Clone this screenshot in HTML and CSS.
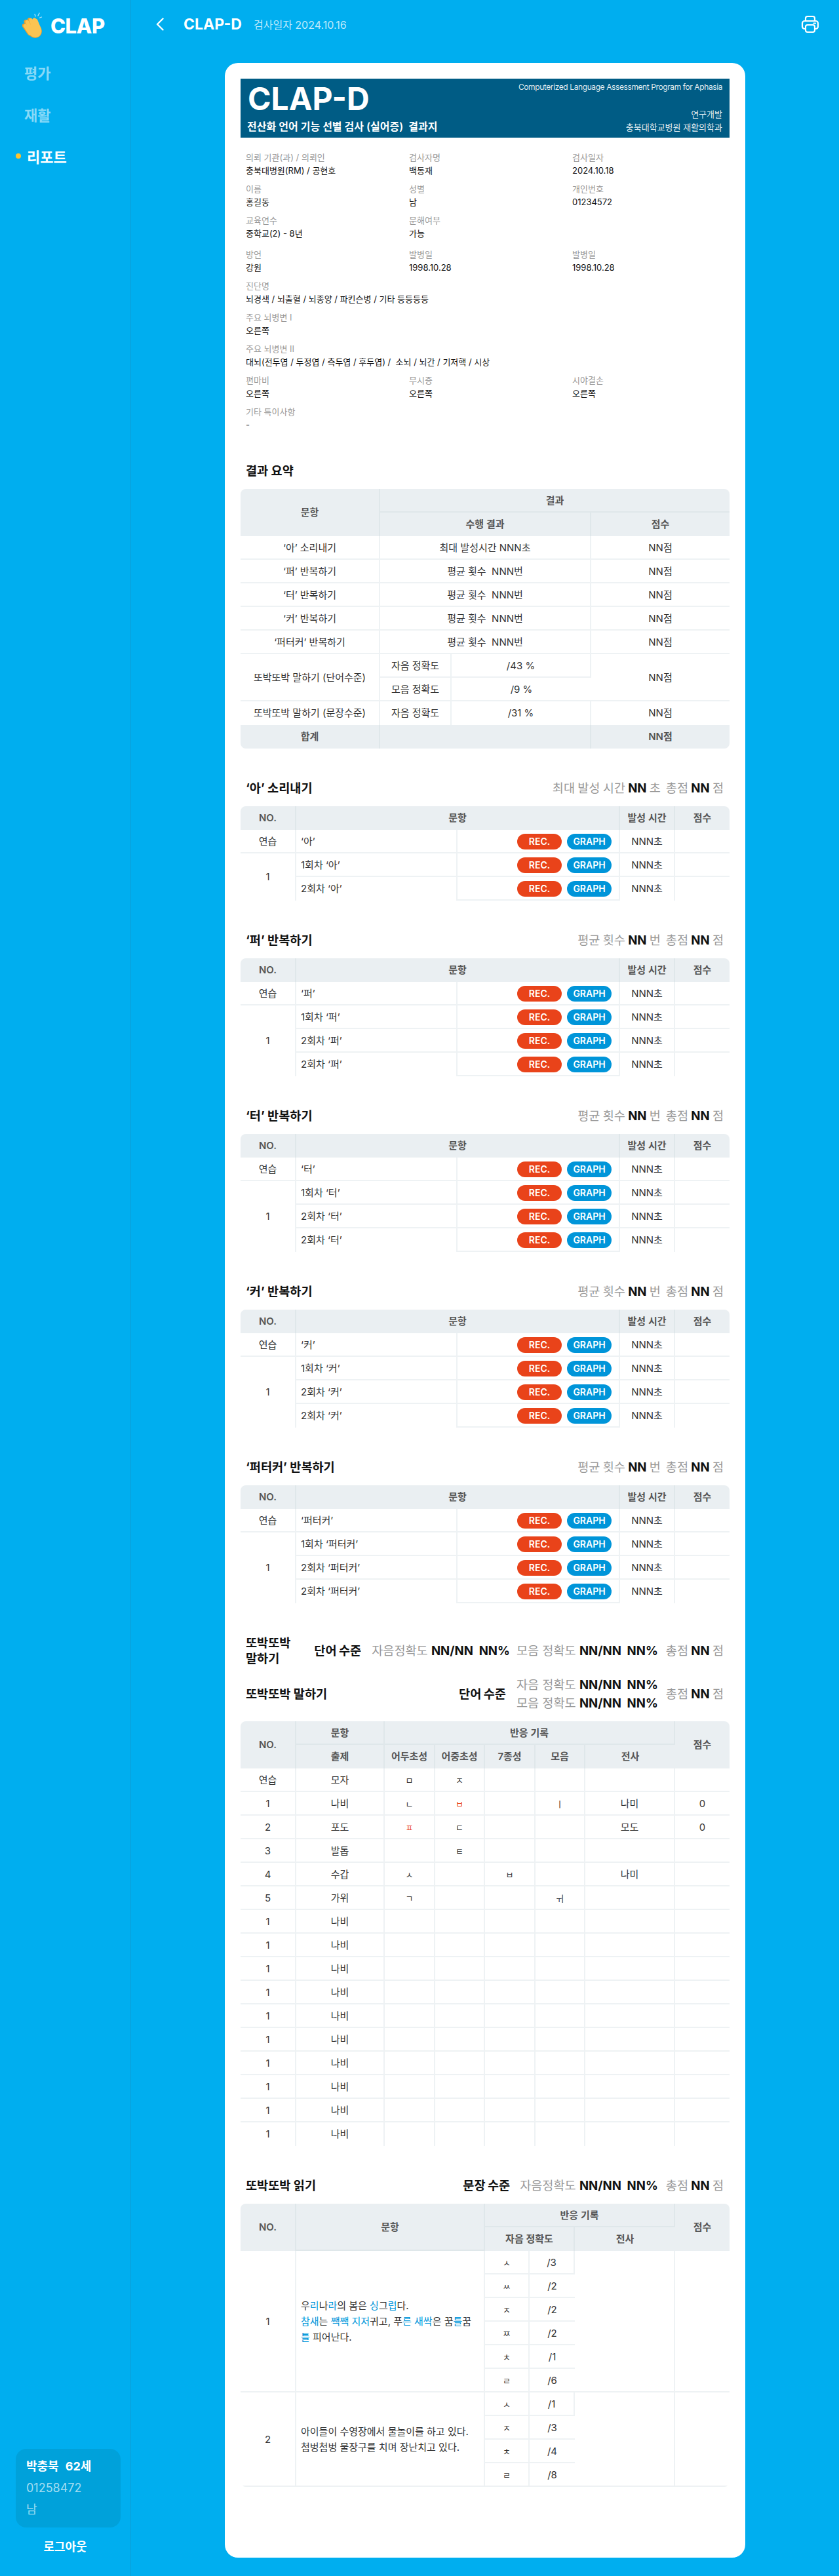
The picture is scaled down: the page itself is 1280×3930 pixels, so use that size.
FILE: index.html
```html
<!DOCTYPE html>
<html lang="ko">
<head>
    <meta charset="UTF-8">
    <meta name="viewport" content="width=device-width, initial-scale=1.0">
    <title>CLAP-D 리포트</title>
    <link rel="stylesheet" href="styles.css">
</head>
<body>
<div class="layout">
    <aside class="sidebar">
        <div class="logo">
            <svg class="logo-hand" width="32" height="40" viewBox="0 0 32 40">
                <path d="M19 2.500l1 3.500M26 1l-2 4M29.500 7l-3 1.200" fill="none" stroke="#bfeafb" stroke-width="1.200" stroke-linecap="round"/>
                <g fill="none" stroke="#ee9f2c" stroke-width="6" stroke-linecap="round">
                    <path d="M2.700 20L11 32M5.500 14L14 28M11 11L18 26"/>
                </g>
                <circle cx="19.500" cy="28.500" r="10.500" fill="#ee9f2c"/>
                <g fill="none" stroke="#fbc452" stroke-width="5.500" stroke-linecap="round">
                    <path d="M4.500 20.500L12 32M7.500 14.500L15 28M13 11.500L19 26M18.500 11L23 25"/>
                </g>
                <path d="M20.500 9.500c1.500 0 2.500 1 3 2.500l5 12c2 6-1 14-8 14-5 0-8-3-10-6l1-9 9-2z" fill="#fbc452"/>
            </svg>
            <span class="logo-text">CLAP</span>
        </div>
        <nav class="nav">
            <a class="nav-item">평가</a>
            <a class="nav-item">재활</a>
            <a class="nav-item active">리포트</a>
        </nav>
        <div class="patient">
            <div class="patient-name"><span>박충북</span><span>62세</span></div>
            <div class="patient-sub">01258472</div>
            <div class="patient-sub">남</div>
        </div>
        <div class="logout">로그아웃</div>
    </aside>

    <main class="main">
        <header class="topbar">
            <svg class="back" width="12" height="20" viewBox="0 0 12 20">
                <path d="M10.500 1.500L2 10l8.500 8.500" fill="none" stroke="#fff" stroke-width="2.400" stroke-linecap="round" stroke-linejoin="round"/>
            </svg>
            <span class="top-title">CLAP-D</span>
            <span class="top-date">검사일자 2024.10.16</span>
            <svg class="print" width="28" height="28" viewBox="0 0 28 28" fill="none" stroke="#fff" stroke-width="2.200" stroke-linejoin="round" stroke-linecap="round">
                <path d="M7 9V5a3 3 0 0 1 3-3h8a3 3 0 0 1 3 3v4"/>
                <path d="M7 21H5.500a3.500 3.500 0 0 1-3.500-3.500V12.500A3.500 3.500 0 0 1 5.500 9h17a3.500 3.500 0 0 1 3.500 3.500v5a3.500 3.500 0 0 1-3.500 3.500H21"/>
                <rect x="7" y="15" width="14" height="11" rx="3"/>
                <path d="M19.500 12.500h2.500"/>
            </svg>
        </header>

        <div class="report">
            <div class="doc-head">
                <div class="doc-left">
                    <div class="doc-title">CLAP-D</div>
                    <div class="doc-sub">전산화 언어 기능 선별 검사 (실어증)&nbsp; 결과지</div>
                </div>
                <div class="doc-right">
                    <div class="doc-en">Computerized Language Assessment Program for Aphasia</div>
                    <div>연구개발<br>충북대학교병원 재활의학과</div>
                </div>
            </div>

            <div class="info">
                <div class="field"><label>의뢰 기관(과) / 의뢰인</label><p>충북대병원(RM) / 공현호</p></div>
                <div class="field"><label>검사자명</label><p>백동재</p></div>
                <div class="field"><label>검사일자</label><p>2024.10.18</p></div>
                <div class="field"><label>이름</label><p>홍길동</p></div>
                <div class="field"><label>성별</label><p>남</p></div>
                <div class="field"><label>개인번호</label><p>01234572</p></div>
                <div class="field"><label>교육연수</label><p>중학교(2) - 8년</p></div>
                <div class="field"><label>문해여부</label><p>가능</p></div>
                <div class="field"></div>
                <div class="field push"><label>방언</label><p>강원</p></div>
                <div class="field push"><label>발병일</label><p>1998.10.28</p></div>
                <div class="field push"><label>발병일</label><p>1998.10.28</p></div>
                <div class="field wide"><label>진단명</label><p>뇌경색 / 뇌출혈 / 뇌종양 / 파킨슨병 / 기타 등등등등</p></div>
                <div class="field wide"><label>주요 뇌병변 I</label><p>오른쪽</p></div>
                <div class="field wide"><label>주요 뇌병변 II</label><p>대뇌(전두엽 / 두정엽 / 측두엽 / 후두엽) / &nbsp;소뇌 / 뇌간 / 기저핵 / 시상</p></div>
                <div class="field"><label>편마비</label><p>오른쪽</p></div>
                <div class="field"><label>무시증</label><p>오른쪽</p></div>
                <div class="field"><label>시야결손</label><p>오른쪽</p></div>
                <div class="field wide"><label>기타 특이사항</label><p>-</p></div>
            </div>

            <section class="section">
                <div class="sec-head"><h2>결과 요약</h2></div>
                <div class="tb-wrap">
                    <table class="tb tb-summary">
                        <colgroup><col><col><col><col></colgroup>
                        <thead>
                            <tr><th rowspan="2">문항</th><th colspan="3" class="bb">결과</th></tr>
                            <tr><th colspan="2">수행 결과</th><th>점수</th></tr>
                        </thead>
                        <tbody>
                            <tr><td>‘아’ 소리내기</td><td colspan="2">최대 발성시간 NNN초</td><td>NN점</td></tr>
                            <tr><td>‘퍼’ 반복하기</td><td colspan="2">평균 횟수 &nbsp;NNN번</td><td>NN점</td></tr>
                            <tr><td>‘터’ 반복하기</td><td colspan="2">평균 횟수 &nbsp;NNN번</td><td>NN점</td></tr>
                            <tr><td>‘커’ 반복하기</td><td colspan="2">평균 횟수 &nbsp;NNN번</td><td>NN점</td></tr>
                            <tr><td>‘퍼터커’ 반복하기</td><td colspan="2">평균 횟수 &nbsp;NNN번</td><td>NN점</td></tr>
                            <tr><td rowspan="2">또박또박 말하기 (단어수준)</td><td>자음 정확도</td><td>/43 %</td><td rowspan="2">NN점</td></tr>
                            <tr><td>모음 정확도</td><td>/9 %</td></tr>
                            <tr><td>또박또박 말하기 (문장수준)</td><td>자음 정확도</td><td>/31 %</td><td>NN점</td></tr>
                        </tbody>
                        <tfoot>
                            <tr><th>합계</th><th colspan="2"></th><th>NN점</th></tr>
                        </tfoot>
                    </table>
                </div>
            </section>

            <section class="section">
                <div class="sec-head">
                    <h2>‘아’ 소리내기</h2>
                    <div class="stats"><span>최대 발성 시간 <b>NN</b> 초</span><span>총점 <b>NN</b> 점</span></div>
                </div>
                <div class="tb-wrap">
                    <table class="tb tb-repeat">
                        <colgroup><col><col><col><col><col></colgroup>
                        <thead><tr><th>NO.</th><th colspan="2">문항</th><th>발성 시간</th><th>점수</th></tr></thead>
                        <tbody>
                            <tr><td>연습</td><td class="left">‘아’</td><td class="btns"><a class="btn rec">REC.</a><a class="btn graph">GRAPH</a></td><td>NNN초</td><td></td></tr>
                            <tr><td rowspan="2" class="nb">1</td><td class="left">1회차 ‘아’</td><td class="btns"><a class="btn rec">REC.</a><a class="btn graph">GRAPH</a></td><td>NNN초</td><td></td></tr>
                            <tr><td class="left">2회차 ‘아’</td><td class="btns bb"><a class="btn rec">REC.</a><a class="btn graph">GRAPH</a></td><td>NNN초</td><td></td></tr>
                        </tbody>
                    </table>
                </div>
            </section>

            <section class="section">
                <div class="sec-head">
                    <h2>‘퍼’ 반복하기</h2>
                    <div class="stats"><span>평균 횟수 <b>NN</b> 번</span><span>총점 <b>NN</b> 점</span></div>
                </div>
                <div class="tb-wrap">
                    <table class="tb tb-repeat">
                        <colgroup><col><col><col><col><col></colgroup>
                        <thead><tr><th>NO.</th><th colspan="2">문항</th><th>발성 시간</th><th>점수</th></tr></thead>
                        <tbody>
                            <tr><td>연습</td><td class="left">‘퍼’</td><td class="btns"><a class="btn rec">REC.</a><a class="btn graph">GRAPH</a></td><td>NNN초</td><td></td></tr>
                            <tr><td rowspan="3" class="nb">1</td><td class="left">1회차 ‘퍼’</td><td class="btns"><a class="btn rec">REC.</a><a class="btn graph">GRAPH</a></td><td>NNN초</td><td></td></tr>
                            <tr><td class="left">2회차 ‘퍼’</td><td class="btns"><a class="btn rec">REC.</a><a class="btn graph">GRAPH</a></td><td>NNN초</td><td></td></tr>
                            <tr><td class="left">2회차 ‘퍼’</td><td class="btns bb"><a class="btn rec">REC.</a><a class="btn graph">GRAPH</a></td><td>NNN초</td><td></td></tr>
                        </tbody>
                    </table>
                </div>
            </section>

            <section class="section">
                <div class="sec-head">
                    <h2>‘터’ 반복하기</h2>
                    <div class="stats"><span>평균 횟수 <b>NN</b> 번</span><span>총점 <b>NN</b> 점</span></div>
                </div>
                <div class="tb-wrap">
                    <table class="tb tb-repeat">
                        <colgroup><col><col><col><col><col></colgroup>
                        <thead><tr><th>NO.</th><th colspan="2">문항</th><th>발성 시간</th><th>점수</th></tr></thead>
                        <tbody>
                            <tr><td>연습</td><td class="left">‘터’</td><td class="btns"><a class="btn rec">REC.</a><a class="btn graph">GRAPH</a></td><td>NNN초</td><td></td></tr>
                            <tr><td rowspan="3" class="nb">1</td><td class="left">1회차 ‘터’</td><td class="btns"><a class="btn rec">REC.</a><a class="btn graph">GRAPH</a></td><td>NNN초</td><td></td></tr>
                            <tr><td class="left">2회차 ‘터’</td><td class="btns"><a class="btn rec">REC.</a><a class="btn graph">GRAPH</a></td><td>NNN초</td><td></td></tr>
                            <tr><td class="left">2회차 ‘터’</td><td class="btns bb"><a class="btn rec">REC.</a><a class="btn graph">GRAPH</a></td><td>NNN초</td><td></td></tr>
                        </tbody>
                    </table>
                </div>
            </section>

            <section class="section">
                <div class="sec-head">
                    <h2>‘커’ 반복하기</h2>
                    <div class="stats"><span>평균 횟수 <b>NN</b> 번</span><span>총점 <b>NN</b> 점</span></div>
                </div>
                <div class="tb-wrap">
                    <table class="tb tb-repeat">
                        <colgroup><col><col><col><col><col></colgroup>
                        <thead><tr><th>NO.</th><th colspan="2">문항</th><th>발성 시간</th><th>점수</th></tr></thead>
                        <tbody>
                            <tr><td>연습</td><td class="left">‘커’</td><td class="btns"><a class="btn rec">REC.</a><a class="btn graph">GRAPH</a></td><td>NNN초</td><td></td></tr>
                            <tr><td rowspan="3" class="nb">1</td><td class="left">1회차 ‘커’</td><td class="btns"><a class="btn rec">REC.</a><a class="btn graph">GRAPH</a></td><td>NNN초</td><td></td></tr>
                            <tr><td class="left">2회차 ‘커’</td><td class="btns"><a class="btn rec">REC.</a><a class="btn graph">GRAPH</a></td><td>NNN초</td><td></td></tr>
                            <tr><td class="left">2회차 ‘커’</td><td class="btns bb"><a class="btn rec">REC.</a><a class="btn graph">GRAPH</a></td><td>NNN초</td><td></td></tr>
                        </tbody>
                    </table>
                </div>
            </section>

            <section class="section">
                <div class="sec-head">
                    <h2>‘퍼터커’ 반복하기</h2>
                    <div class="stats"><span>평균 횟수 <b>NN</b> 번</span><span>총점 <b>NN</b> 점</span></div>
                </div>
                <div class="tb-wrap">
                    <table class="tb tb-repeat">
                        <colgroup><col><col><col><col><col></colgroup>
                        <thead><tr><th>NO.</th><th colspan="2">문항</th><th>발성 시간</th><th>점수</th></tr></thead>
                        <tbody>
                            <tr><td>연습</td><td class="left">‘퍼터커’</td><td class="btns"><a class="btn rec">REC.</a><a class="btn graph">GRAPH</a></td><td>NNN초</td><td></td></tr>
                            <tr><td rowspan="3" class="nb">1</td><td class="left">1회차 ‘퍼터커’</td><td class="btns"><a class="btn rec">REC.</a><a class="btn graph">GRAPH</a></td><td>NNN초</td><td></td></tr>
                            <tr><td class="left">2회차 ‘퍼터커’</td><td class="btns"><a class="btn rec">REC.</a><a class="btn graph">GRAPH</a></td><td>NNN초</td><td></td></tr>
                            <tr><td class="left">2회차 ‘퍼터커’</td><td class="btns bb"><a class="btn rec">REC.</a><a class="btn graph">GRAPH</a></td><td>NNN초</td><td></td></tr>
                        </tbody>
                    </table>
                </div>
            </section>

            <section class="section">
                <div class="sec-head tall">
                    <h2 class="narrow">또박또박 말하기</h2>
                    <div class="stats"><h3>단어 수준</h3><div class="acc"><span>자음정확도 <b>NN/NN&nbsp; NN%</b></span><span>모음 정확도 <b>NN/NN&nbsp; NN%</b></span></div><span>총점 <b>NN</b> 점</span></div>
                </div>
                <div class="sec-head tall">
                    <h2>또박또박 말하기</h2>
                    <div class="stats"><h3>단어 수준</h3><div class="acc stack"><span>자음 정확도 <b>NN/NN&nbsp; NN%</b></span><span>모음 정확도 <b>NN/NN&nbsp; NN%</b></span></div><span>총점 <b>NN</b> 점</span></div>
                </div>
                <div class="tb-wrap">
                    <table class="tb tb-word">
                        <colgroup><col><col><col><col><col><col><col><col></colgroup>
                        <thead>
                            <tr><th rowspan="2">NO.</th><th class="bb">문항</th><th colspan="5" class="bb">반응 기록</th><th rowspan="2">점수</th></tr>
                            <tr><th>출제</th><th>어두초성</th><th>어중초성</th><th>7종성</th><th>모음</th><th>전사</th></tr>
                        </thead>
                        <tbody>
                            <tr><td>연습</td><td>모자</td><td class="jamo">ㅁ</td><td class="jamo">ㅈ</td><td></td><td></td><td></td><td></td></tr>
                            <tr><td>1</td><td>나비</td><td class="jamo">ㄴ</td><td class="jamo red">ㅂ</td><td></td><td class="jamo">ㅣ</td><td>나미</td><td>0</td></tr>
                            <tr><td>2</td><td>포도</td><td class="jamo red">ㅍ</td><td class="jamo">ㄷ</td><td></td><td></td><td>모도</td><td>0</td></tr>
                            <tr><td>3</td><td>발톱</td><td></td><td class="jamo">ㅌ</td><td></td><td></td><td></td><td></td></tr>
                            <tr><td>4</td><td>수갑</td><td class="jamo">ㅅ</td><td></td><td class="jamo">ㅂ</td><td></td><td>나미</td><td></td></tr>
                            <tr><td>5</td><td>가위</td><td class="jamo">ㄱ</td><td></td><td></td><td class="jamo">ㅟ</td><td></td><td></td></tr>
                            <tr><td>1</td><td>나비</td><td></td><td></td><td></td><td></td><td></td><td></td></tr>
                            <tr><td>1</td><td>나비</td><td></td><td></td><td></td><td></td><td></td><td></td></tr>
                            <tr><td>1</td><td>나비</td><td></td><td></td><td></td><td></td><td></td><td></td></tr>
                            <tr><td>1</td><td>나비</td><td></td><td></td><td></td><td></td><td></td><td></td></tr>
                            <tr><td>1</td><td>나비</td><td></td><td></td><td></td><td></td><td></td><td></td></tr>
                            <tr><td>1</td><td>나비</td><td></td><td></td><td></td><td></td><td></td><td></td></tr>
                            <tr><td>1</td><td>나비</td><td></td><td></td><td></td><td></td><td></td><td></td></tr>
                            <tr><td>1</td><td>나비</td><td></td><td></td><td></td><td></td><td></td><td></td></tr>
                            <tr><td>1</td><td>나비</td><td></td><td></td><td></td><td></td><td></td><td></td></tr>
                            <tr><td>1</td><td>나비</td><td></td><td></td><td></td><td></td><td></td><td></td></tr>
                        </tbody>
                    </table>
                </div>
            </section>

            <section class="section">
                <div class="sec-head">
                    <h2>또박또박 읽기</h2>
                    <div class="stats"><h3 class="level-sent">문장 수준</h3><div class="acc"><span>자음정확도 <b>NN/NN&nbsp; NN%</b></span></div><span>총점 <b>NN</b> 점</span></div>
                </div>
                <div class="tb-wrap">
                    <table class="tb tb-read">
                        <colgroup><col><col><col><col><col><col></colgroup>
                        <thead>
                            <tr><th rowspan="2">NO.</th><th rowspan="2" class="bb">문항</th><th colspan="3" class="bb">반응 기록</th><th rowspan="2">점수</th></tr>
                            <tr><th colspan="2">자음 정확도</th><th>전사</th></tr>
                        </thead>
                        <tbody>
                            <tr>
                                <td rowspan="6">1</td>
                                <td rowspan="6" class="left sentence">우<em>리</em>나<em>라</em>의 봄은 <em>싱</em>그<em>럽</em>다.<br><em>참새</em>는 <em>짹짹 지저</em>귀고, 푸<em>른 새싹</em>은 꿈<em>틀</em>꿈<em>틀</em> 피어난다.</td>
                                <td class="jamo">ㅅ</td><td>/3</td>
                                <td rowspan="6"></td>
                                <td rowspan="6"></td>
                            </tr>
                            <tr><td class="jamo">ㅆ</td><td>/2</td></tr>
                            <tr><td class="jamo">ㅈ</td><td>/2</td></tr>
                            <tr><td class="jamo">ㅉ</td><td>/2</td></tr>
                            <tr><td class="jamo">ㅊ</td><td>/1</td></tr>
                            <tr><td class="jamo">ㄹ</td><td>/6</td></tr>
                            <tr>
                                <td rowspan="4">2</td>
                                <td rowspan="4" class="left sentence">아이들이 수영장에서 물놀이를 하고 있다.<br>첨벙첨벙 물장구를 치며 장난치고 있다.</td>
                                <td class="jamo">ㅅ</td><td>/1</td>
                                <td rowspan="4"></td>
                                <td rowspan="4"></td>
                            </tr>
                            <tr><td class="jamo">ㅈ</td><td>/3</td></tr>
                            <tr><td class="jamo">ㅊ</td><td>/4</td></tr>
                            <tr><td class="jamo">ㄹ</td><td>/8</td></tr>
                        </tbody>
                    </table>
                </div>
            </section>
        </div>
    </main>
</div>
</body>
</html>
```

FILE: styles.css
```css
* {
    box-sizing: border-box;
}

body {
    margin: 0;
    background-color: #00aeef;
    font-family: Inter, "Noto Sans CJK KR", sans-serif;
    color: #333;
}

.layout {
    display: flex;
    min-height: 3930px;
}

/* sidebar */
.sidebar {
    width: 200px;
    flex-shrink: 0;
    display: flex;
    flex-direction: column;
    border-right: 1px solid #0b9fd8;
    color: #fff;
}

.logo {
    display: flex;
    align-items: center;
    gap: 11px;
    height: 78px;
    padding: 0 0 0 34px;
}

.logo-text {
    font-size: 31px;
    font-weight: 800;
    letter-spacing: -0.5px;
}

.nav {
    display: flex;
    flex-direction: column;
}

.nav-item {
    display: flex;
    align-items: center;
    height: 64px;
    padding-left: 37px;
    font-size: 22px;
    font-weight: 700;
    color: rgba(255, 255, 255, 0.55);
}

.nav-item.active {
    padding-left: 24px;
    gap: 9px;
    color: #fff;
}

.nav-item.active::before {
    content: "";
    width: 8px;
    height: 8px;
    border-radius: 50%;
    background-color: #fdc32d;
}

.patient {
    margin: auto 0 0 24px;
    width: 160px;
    height: 120px;
    padding: 10px 16px;
    border-radius: 16px;
    background-color: #00a1da;
}

.patient-name {
    display: flex;
    gap: 10px;
    font-size: 18px;
    font-weight: 700;
    line-height: 33px;
}

.patient-sub {
    font-size: 18px;
    line-height: 33px;
    color: rgba(255, 255, 255, 0.65);
}

.logout {
    height: 74px;
    padding-top: 16px;
    text-align: center;
    font-size: 18px;
    font-weight: 600;
    line-height: 28px;
}

/* top bar */
.main {
    flex: 1;
}

.topbar {
    display: flex;
    align-items: center;
    height: 74px;
    padding: 0 30px 0 38px;
    color: #fff;
}

.top-title {
    margin-left: 30px;
    font-size: 23px;
    font-weight: 700;
}

.top-date {
    margin-left: 18px;
    font-size: 16px;
    color: rgba(255, 255, 255, 0.75);
}

.print {
    margin-left: auto;
}

/* report */
.report {
    width: 794px;
    margin: 22px 0 28px 143px;
    padding: 24px 24px 108px;
    border-radius: 20px;
    background-color: #fff;
}

.doc-head {
    display: flex;
    justify-content: space-between;
    height: 90px;
    padding: 3px 11px 6px 10px;
    background-color: #005c85;
    color: #fff;
}

.doc-title {
    margin-left: 1px;
    font-size: 48px;
    font-weight: 700;
    line-height: 56px;
}

.doc-sub {
    margin-top: 2px;
    font-size: 16px;
    font-weight: 600;
    line-height: 24px;
}

.doc-right {
    display: flex;
    flex-direction: column;
    justify-content: space-between;
    text-align: right;
    font-size: 13px;
    line-height: 20px;
    color: rgba(255, 255, 255, 0.9);
}

.doc-en {
    font-size: 12px;
    letter-spacing: -0.4px;
}

.info {
    display: grid;
    grid-template-columns: repeat(3, 249px);
    row-gap: 8px;
    margin-top: 20px;
    padding-left: 8px;
    font-size: 13px;
    line-height: 20px;
}

.field label {
    display: block;
    color: #999;
}

.field p {
    margin: 0;
    color: #111;
}

.field.wide {
    grid-column: span 3;
}

.field.push {
    margin-top: 4px;
}

/* sections */
.section {
    margin-top: 48px;
}

.sec-head {
    display: flex;
    justify-content: space-between;
    align-items: center;
    margin-bottom: 16px;
    padding: 0 9px 0 8px;
    line-height: 24px;
    font-size: 18.6px;
}

.sec-head h2,
.sec-head h3 {
    margin: 0;
    font-size: inherit;
    font-weight: 700;
    color: #111;
}

.sec-head .narrow {
    width: 70px;
}

.stats {
    display: flex;
    align-items: center;
    gap: 8px;
    word-spacing: -1px;
    color: #999;
}

.stats b {
    font-weight: 700;
    color: #111;
}

.stats h3 {
    margin-right: 8px;
}

.stats .level-sent {
    margin-right: 7px;
}

.acc {
    display: flex;
    gap: 10px;
    margin-right: 4px;
    word-spacing: 0;
}

.acc.stack {
    flex-direction: column;
    gap: 4px;
}

/* tables */
.tb-wrap {
    border-radius: 8px;
    overflow: hidden;
}

.tb {
    width: 746px;
    table-layout: fixed;
    border-collapse: separate;
    border-spacing: 0;
    font-size: 15px;
    line-height: 24px;
}

.tb th,
.tb td {
    height: 36px;
    padding: 0;
    text-align: center;
    border-right: 2px solid #eef2f4;
}

.tb th:last-child,
.tb td:last-child {
    border-right: none;
}

.tb th {
    font-weight: 600;
    color: #555;
    background-color: #eaeff2;
    border-right-color: #dfe7ea;
}

.tb th.bb {
    box-shadow: inset 0 -2px 0 #dfe7ea;
}

.tb td {
    font-weight: 400;
    color: #333;
    box-shadow: inset 0 -2px 0 #eef2f4;
}

.tb tbody tr:last-child td,
.tb td.nb {
    box-shadow: none;
}

.tb tbody tr:last-child td.bb {
    box-shadow: inset 0 -2px 0 #eef2f4;
}

.tb td.left {
    padding-left: 7px;
    text-align: left;
}

.tb td.sentence {
    padding-right: 15px;
}

.tb-summary col:nth-child(1) { width: 213px; }
.tb-summary col:nth-child(2) { width: 109px; }
.tb-summary col:nth-child(3) { width: 213px; }
.tb-summary col:nth-child(4) { width: 211px; }

.tb-repeat col:nth-child(1) { width: 85px; }
.tb-repeat col:nth-child(2) { width: 246px; }
.tb-repeat col:nth-child(3) { width: 248px; }
.tb-repeat col:nth-child(4) { width: 84px; }
.tb-repeat col:nth-child(5) { width: 83px; }

.tb-word col:nth-child(1) { width: 85px; }
.tb-word col:nth-child(2) { width: 135px; }
.tb-word col:nth-child(3) { width: 77px; }
.tb-word col:nth-child(4) { width: 76px; }
.tb-word col:nth-child(5) { width: 77px; }
.tb-word col:nth-child(6) { width: 76px; }
.tb-word col:nth-child(7) { width: 137px; }
.tb-word col:nth-child(8) { width: 83px; }

.tb-read col:nth-child(1) { width: 85px; }
.tb-read col:nth-child(2) { width: 288px; }
.tb-read col:nth-child(3) { width: 68px; }
.tb-read col:nth-child(4) { width: 69px; }
.tb-read col:nth-child(5) { width: 153px; }
.tb-read col:nth-child(6) { width: 83px; }

.tb-read tbody tr:last-child td,
.tb-read tbody tr td[rowspan="4"] {
    box-shadow: inset 0 -2px 0 #eef2f4;
}

/* REC. / GRAPH buttons */
.tb td.btns {
    padding-right: 11px;
    text-align: right;
    font-size: 0;
}

.btn {
    display: inline-block;
    height: 24px;
    width: 68px;
    margin-left: 8px;
    border-radius: 12px;
    text-align: center;
    vertical-align: middle;
    font-size: 14px;
    font-weight: 600;
    line-height: 24px;
    color: #fff;
}

.btn.rec {
    background-color: #e9431a;
}

.btn.graph {
    background-color: #0095d9;
}

.jamo {
    font-size: 13px;
}

.tb td.jamo.red {
    color: #e9431a;
}

.sentence em {
    font-style: normal;
    color: #0095d9;
}
```
